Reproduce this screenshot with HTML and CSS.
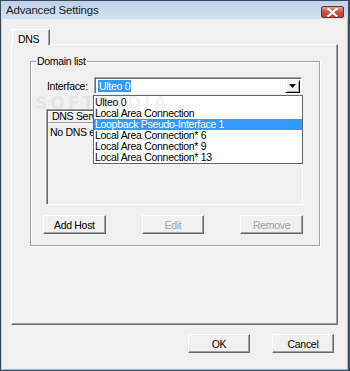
FILE: index.html
```html
<!DOCTYPE html>
<html lang="en">
<head>
    <meta charset="UTF-8">
    <title>Advanced Settings</title>
    <link rel="stylesheet" href="styles.css">
</head>
<body>
    <div class="window">
        <div class="titlebar">
            <span class="title">Advanced Settings</span>
            <button class="close-btn" aria-label="Close">
                <svg width="11" height="9" viewBox="0 0 11 9">
                    <path d="M1.5 1 L9.5 8 M9.5 1 L1.5 8" stroke="#fff" stroke-width="2.2" stroke-linecap="square"/>
                </svg>
            </button>
        </div>
        <div class="client">
            <div class="tabs">
                <div class="tab active">DNS</div>
            </div>
            <div class="tab-panel">
                <div class="groupbox">
                    <span class="legend">Domain list</span>
                    <div class="field-row">
                        <label class="field-label">Interface:</label>
                        <div class="combo">
                            <span class="combo-value"><span class="sel">Ulteo 0</span></span>
                            <span class="combo-arrow">
                                <svg width="7" height="4" viewBox="0 0 7 4"><path d="M0 0 H7 L3.5 4 Z" fill="#000"/></svg>
                            </span>
                            <ul class="dropdown">
                                <li>Ulteo 0</li>
                                <li>Local Area Connection</li>
                                <li class="hl">Loopback Pseudo-Interface 1</li>
                                <li>Local Area Connection* 6</li>
                                <li>Local Area Connection* 9</li>
                                <li>Local Area Connection* 13</li>
                            </ul>
                        </div>
                    </div>
                    <div class="listview">
                        <div class="lv-header"><span class="lv-col">DNS Servers</span></div>
                        <div class="lv-row">No DNS entries</div>
                    </div>
                    <div class="btn-row">
                        <button class="btn">Add Host</button>
                        <button class="btn" disabled>Edit</button>
                        <button class="btn" disabled>Remove</button>
                    </div>
                </div>
            </div>
            <div class="dialog-buttons">
                <button class="btn btn-wide">OK</button>
                <button class="btn btn-wide">Cancel</button>
            </div>
        </div>
        <div class="watermark">SOFTPEDIA</div>
    </div>
</body>
</html>
```

FILE: styles.css
```css
body {
    margin: 0;
    font-family: "Liberation Sans", Arial, sans-serif;
    font-size: 10.5px;
    letter-spacing: -0.3px;
    color: #000;
    background: #fff;
}

.window {
    position: relative;
    width: 350px;
    height: 371px;
    box-sizing: border-box;
    border: 1px solid #3c4a58;
    border-right-width: 2px;
    background: #f0f0f0;
    box-shadow: inset 1px 0 #b7cde4, inset -1px -1px #8fc3e6;
    overflow: hidden;
}

.titlebar {
    height: 18px;
    display: flex;
    align-items: center;
    justify-content: space-between;
    padding: 0 4px 0 5px;
    background: linear-gradient(to bottom, #bcd2ea, #d3e2f2);
}

.title {
    font-size: 11.5px;
    letter-spacing: -0.2px;
    color: #1e1e1e;
}

.close-btn {
    width: 23px;
    height: 12px;
    margin-top: 4px;
    padding: 0;
    border: 1px solid #7a2b2b;
    border-radius: 2px;
    background: linear-gradient(to bottom, #e3a191, #c9503f 50%, #c54232);
    display: flex;
    align-items: center;
    justify-content: center;
}

.client {
    padding: 10px 10px 0 10px;
    box-shadow: inset 1px 0 #b7cde4;
}

.tabs {
    display: flex;
    padding-left: 1px;
}

.tab {
    width: 38px;
    height: 16px;
    box-sizing: border-box;
    padding: 3px 0 0 5px;
    border-left: 1px solid #fff;
    border-top: 1px solid #fff;
    border-right: 1px solid #696969;
    box-shadow: inset -1px 0 #a0a0a0;
    position: relative;
    z-index: 1;
    margin-bottom: -1px;
    background: #f0f0f0;
}

.tab-panel {
    width: 327px;
    height: 281px;
    box-sizing: border-box;
    border-top: 1px solid #fff;
    border-left: 1px solid #fff;
    border-right: 1px solid #696969;
    border-bottom: 1px solid #696969;
    box-shadow: inset -1px -1px #a0a0a0;
    padding: 16px 0 0 18px;
}

.groupbox {
    position: relative;
    width: 290px;
    height: 185px;
    box-sizing: border-box;
    border: 1px solid #a0a0a0;
    box-shadow: inset 1px 1px #fff, 1px 1px #fff;
    padding: 15px 16px 0 12px;
}

.legend {
    position: absolute;
    top: -7px;
    left: 5px;
    padding: 0 1px;
    background: #f0f0f0;
}

.field-row {
    display: flex;
    align-items: center;
    padding-left: 4px;
}

.field-label {
    width: 47px;
}

.combo {
    position: relative;
    width: 208px;
    height: 17px;
    box-sizing: border-box;
    border-top: 1px solid #a0a0a0;
    border-left: 1px solid #a0a0a0;
    border-right: 1px solid #fff;
    border-bottom: 1px solid #fff;
    box-shadow: inset 1px 1px #696969;
    background: #fff;
    display: flex;
    align-items: center;
    justify-content: space-between;
    padding: 0 1px 0 3px;
}

.combo-value {
    padding-top: 1px;
}

.sel {
    background: #3399ff;
    color: #fff;
    padding: 0 1px;
}

.combo-arrow {
    width: 15px;
    height: 13px;
    margin-top: 1px;
    box-sizing: border-box;
    border-top: 1px solid #f0f0f0;
    border-left: 1px solid #f0f0f0;
    border-right: 1px solid #000;
    border-bottom: 1px solid #000;
    box-shadow: inset 1px 1px #fff, inset -1px -1px #a0a0a0;
    background: #f0f0f0;
    display: flex;
    align-items: center;
    justify-content: center;
}

.dropdown {
    position: absolute;
    top: 17px;
    left: -2px;
    width: 210px;
    box-sizing: border-box;
    margin: 0;
    padding: 1px 0 0 0;
    list-style: none;
    border: 1px solid #646464;
    background: #fff;
    z-index: 2;
}

.dropdown li {
    height: 11px;
    line-height: 11px;
    padding-left: 1px;
    white-space: nowrap;
}

.dropdown li.hl {
    background: #3399ff;
    color: #fff;
}

.listview {
    margin: 15px 0 0 3px;
    width: 257px;
    height: 96px;
    box-sizing: border-box;
    border-top: 1px solid #a0a0a0;
    border-left: 1px solid #a0a0a0;
    border-right: 1px solid #fff;
    border-bottom: 1px solid #fff;
    box-shadow: inset 1px 1px #696969;
    background: #f0f0f0;
    padding: 1px 0 0 1px;
    overflow: hidden;
}

.lv-header {
    height: 12px;
    display: flex;
}

.lv-col {
    width: 90px;
    box-sizing: border-box;
    padding: 0 0 0 4px;
    border-right: 1px solid #a0a0a0;
    border-bottom: 1px solid #a0a0a0;
    box-shadow: inset 1px 1px #fff;
    line-height: 11px;
}

.lv-row {
    padding: 3px 0 0 2px;
}

.btn-row {
    display: flex;
    gap: 36px;
    margin-top: 10px;
}

.btn {
    width: 64px;
    height: 19px;
    box-sizing: border-box;
    font-family: inherit;
    font-size: 10.5px;
    letter-spacing: -0.3px;
    color: #000;
    background: #f0f0f0;
    border-top: 1px solid #fff;
    border-left: 1px solid #fff;
    border-right: 1px solid #696969;
    border-bottom: 1px solid #696969;
    box-shadow: inset -1px -1px #a0a0a0;
    padding: 0;
}

.btn:disabled {
    color: #a0a0a0;
}

.dialog-buttons {
    display: flex;
    justify-content: flex-end;
    gap: 22px;
    margin-top: 9px;
    padding-right: 4px;
}

.btn-wide {
    width: 62px;
}

.watermark {
    position: absolute;
    left: 34px;
    top: 92px;
    font-family: "DejaVu Sans", sans-serif;
    font-weight: bold;
    font-size: 17px;
    letter-spacing: 3px;
    color: rgba(150, 150, 150, 0.12);
    z-index: 5;
    pointer-events: none;
}
```
